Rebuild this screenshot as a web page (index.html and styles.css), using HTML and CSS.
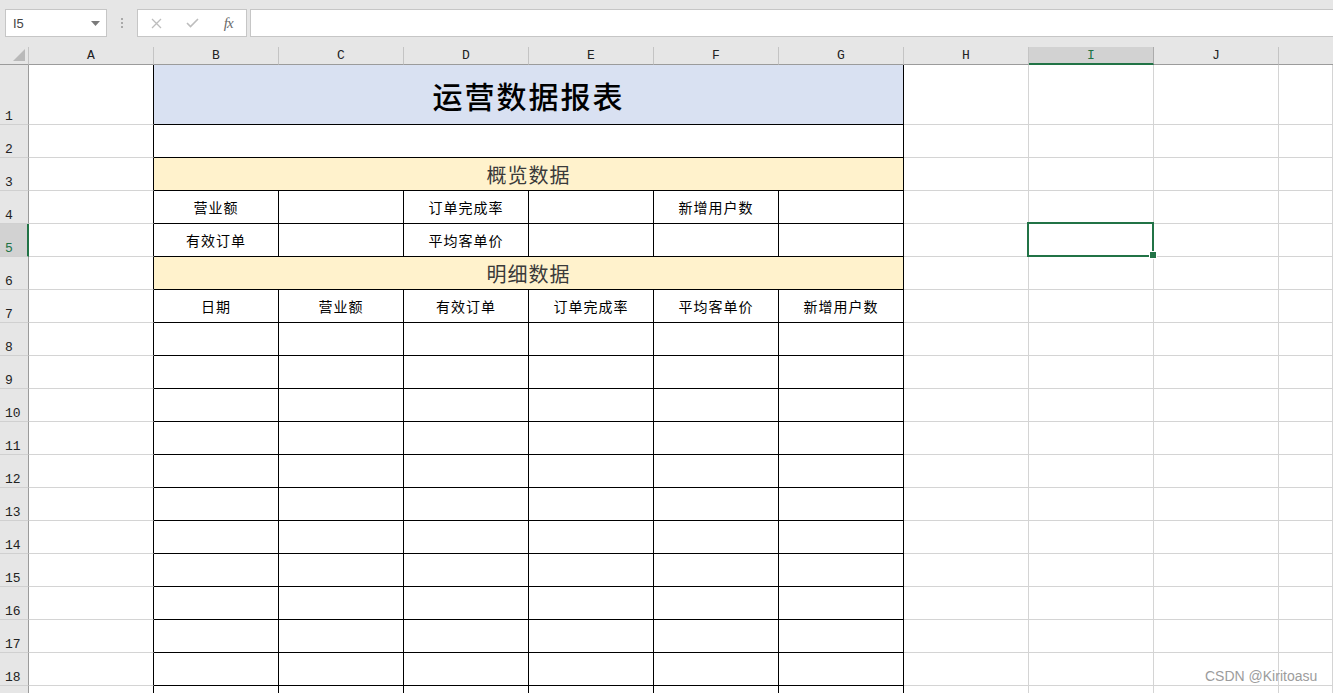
FILE: index.html
```html
<!DOCTYPE html>
<html lang="zh-CN">
<head>
<meta charset="utf-8">
<title>运营数据报表</title>
<link rel="stylesheet" href="styles.css">
</head>
<body>
<div class="toolbar">
  <div class="namebox"><span>I5</span><svg width="9" height="5" viewBox="0 0 9 5"><path d="M0 0H9L4.5 5Z" fill="#7a7a7a"/></svg></div>
  <div class="dots"><i></i><i></i><i></i></div>
  <div class="fbtns">
    <span class="fb"><svg width="11" height="11" viewBox="0 0 11 11"><path d="M1 1L10 10M10 1L1 10" stroke="#bdbdbd" stroke-width="1.3" fill="none"/></svg></span>
    <span class="fb"><svg width="13" height="10" viewBox="0 0 13 10"><path d="M1 5L4.5 8.5L12 1" stroke="#bdbdbd" stroke-width="1.6" fill="none"/></svg></span>
    <span class="fb fx">fx</span>
  </div>
  <div class="finput"></div>
</div>

<div class="sheet">
  <div class="row hdr">
    <div class="corner"><svg width="12" height="12" viewBox="0 0 12 12"><path d="M12 0V12H0Z" fill="#b9b9b9"/></svg></div>
    <div class="ch">A</div><div class="ch">B</div><div class="ch">C</div><div class="ch">D</div><div class="ch">E</div><div class="ch">F</div><div class="ch">G</div><div class="ch">H</div><div class="ch selcol">I</div><div class="ch">J</div><div class="ch last"></div>
  </div>

  <div class="row r1">
    <div class="rh"><span>1</span></div><div class="c a"></div>
    <div class="c t m6 title">运营数据报表</div>
    <div class="c"></div><div class="c"></div><div class="c"></div><div class="c last"></div>
  </div>

  <div class="row">
    <div class="rh"><span>2</span></div><div class="c a"></div>
    <div class="c t m6"></div>
    <div class="c"></div><div class="c"></div><div class="c"></div><div class="c last"></div>
  </div>

  <div class="row">
    <div class="rh"><span>3</span></div><div class="c a"></div>
    <div class="c t m6 section">概览数据</div>
    <div class="c"></div><div class="c"></div><div class="c"></div><div class="c last"></div>
  </div>

  <div class="row">
    <div class="rh"><span>4</span></div><div class="c a"></div>
    <div class="c t lbl">营业额</div><div class="c t"></div><div class="c t lbl">订单完成率</div><div class="c t"></div><div class="c t lbl">新增用户数</div><div class="c t"></div>
    <div class="c"></div><div class="c"></div><div class="c"></div><div class="c last"></div>
  </div>

  <div class="row">
    <div class="rh selrow"><span>5</span></div><div class="c a"></div>
    <div class="c t lbl">有效订单</div><div class="c t"></div><div class="c t lbl">平均客单价</div><div class="c t"></div><div class="c t"></div><div class="c t"></div>
    <div class="c"></div><div class="c active"><div class="sel"><div class="handle"></div></div></div><div class="c"></div><div class="c last"></div>
  </div>

  <div class="row">
    <div class="rh"><span>6</span></div><div class="c a"></div>
    <div class="c t m6 section">明细数据</div>
    <div class="c"></div><div class="c"></div><div class="c"></div><div class="c last"></div>
  </div>

  <div class="row">
    <div class="rh"><span>7</span></div><div class="c a"></div>
    <div class="c t lbl">日期</div><div class="c t lbl">营业额</div><div class="c t lbl">有效订单</div><div class="c t lbl">订单完成率</div><div class="c t lbl">平均客单价</div><div class="c t lbl">新增用户数</div>
    <div class="c"></div><div class="c"></div><div class="c"></div><div class="c last"></div>
  </div>

  <div class="row"><div class="rh"><span>8</span></div><div class="c a"></div><div class="c t"></div><div class="c t"></div><div class="c t"></div><div class="c t"></div><div class="c t"></div><div class="c t"></div><div class="c"></div><div class="c"></div><div class="c"></div><div class="c last"></div></div>
  <div class="row"><div class="rh"><span>9</span></div><div class="c a"></div><div class="c t"></div><div class="c t"></div><div class="c t"></div><div class="c t"></div><div class="c t"></div><div class="c t"></div><div class="c"></div><div class="c"></div><div class="c"></div><div class="c last"></div></div>
  <div class="row"><div class="rh"><span>10</span></div><div class="c a"></div><div class="c t"></div><div class="c t"></div><div class="c t"></div><div class="c t"></div><div class="c t"></div><div class="c t"></div><div class="c"></div><div class="c"></div><div class="c"></div><div class="c last"></div></div>
  <div class="row"><div class="rh"><span>11</span></div><div class="c a"></div><div class="c t"></div><div class="c t"></div><div class="c t"></div><div class="c t"></div><div class="c t"></div><div class="c t"></div><div class="c"></div><div class="c"></div><div class="c"></div><div class="c last"></div></div>
  <div class="row"><div class="rh"><span>12</span></div><div class="c a"></div><div class="c t"></div><div class="c t"></div><div class="c t"></div><div class="c t"></div><div class="c t"></div><div class="c t"></div><div class="c"></div><div class="c"></div><div class="c"></div><div class="c last"></div></div>
  <div class="row"><div class="rh"><span>13</span></div><div class="c a"></div><div class="c t"></div><div class="c t"></div><div class="c t"></div><div class="c t"></div><div class="c t"></div><div class="c t"></div><div class="c"></div><div class="c"></div><div class="c"></div><div class="c last"></div></div>
  <div class="row"><div class="rh"><span>14</span></div><div class="c a"></div><div class="c t"></div><div class="c t"></div><div class="c t"></div><div class="c t"></div><div class="c t"></div><div class="c t"></div><div class="c"></div><div class="c"></div><div class="c"></div><div class="c last"></div></div>
  <div class="row"><div class="rh"><span>15</span></div><div class="c a"></div><div class="c t"></div><div class="c t"></div><div class="c t"></div><div class="c t"></div><div class="c t"></div><div class="c t"></div><div class="c"></div><div class="c"></div><div class="c"></div><div class="c last"></div></div>
  <div class="row"><div class="rh"><span>16</span></div><div class="c a"></div><div class="c t"></div><div class="c t"></div><div class="c t"></div><div class="c t"></div><div class="c t"></div><div class="c t"></div><div class="c"></div><div class="c"></div><div class="c"></div><div class="c last"></div></div>
  <div class="row"><div class="rh"><span>17</span></div><div class="c a"></div><div class="c t"></div><div class="c t"></div><div class="c t"></div><div class="c t"></div><div class="c t"></div><div class="c t"></div><div class="c"></div><div class="c"></div><div class="c"></div><div class="c last"></div></div>
  <div class="row"><div class="rh"><span>18</span></div><div class="c a"></div><div class="c t"></div><div class="c t"></div><div class="c t"></div><div class="c t"></div><div class="c t"></div><div class="c t"></div><div class="c"></div><div class="c"></div><div class="c"></div><div class="c last"></div></div>
  <div class="row"><div class="rh"></div><div class="c a"></div><div class="c t"></div><div class="c t"></div><div class="c t"></div><div class="c t"></div><div class="c t"></div><div class="c t"></div><div class="c"></div><div class="c"></div><div class="c"></div><div class="c last"></div></div>
</div>

<div class="watermark">CSDN @Kiritoasu</div>
</body>
</html>
```

FILE: styles.css
```css
* { box-sizing: border-box; }

html, body {
  margin: 0;
  padding: 0;
}

body {
  width: 1333px;
  height: 693px;
  overflow: hidden;
  position: relative;
  background: #ffffff;
  font-family: "Noto Sans CJK SC", "Noto Sans", sans-serif;
  color: #000;
}

/* ---------- formula bar ---------- */
.toolbar {
  height: 47px;
  background: #e6e6e6;
  display: flex;
  align-items: flex-start;
  padding: 9px 0 0 5px;
}

.namebox {
  width: 102px;
  height: 28px;
  background: #fff;
  border: 1px solid #c6c6c6;
  display: flex;
  align-items: center;
  justify-content: space-between;
  padding: 0 6px 0 7px;
  font: 13px "Liberation Sans", Arial, sans-serif;
  color: #444;
}

.dots {
  width: 30px;
  height: 28px;
  display: flex;
  flex-direction: column;
  align-items: center;
  justify-content: center;
  gap: 2px;
}
.dots i {
  display: block;
  width: 2px;
  height: 2px;
  background: #a9a9a9;
}

.fbtns {
  width: 110px;
  height: 28px;
  background: #fff;
  border: 1px solid #c6c6c6;
  display: flex;
  align-items: center;
  padding-left: 1px;
}
.fb {
  width: 36px;
  height: 26px;
  display: flex;
  align-items: center;
  justify-content: center;
}
.fx {
  font: italic 15px "Liberation Serif", "DejaVu Serif", serif;
  color: #6a6a6a;
  letter-spacing: -1px;
}

.finput {
  flex: 1;
  height: 28px;
  margin-left: 3px;
  background: #fff;
  border: 1px solid #c6c6c6;
  border-right: none;
}

/* ---------- sheet ---------- */
.row {
  display: flex;
  height: 33px;
}
.row.hdr { height: 18px; background: #e6e6e6; }
.row.r1 { height: 60px; }

.corner {
  width: 29px;
  flex: none;
  border-right: 1px solid #c4c4c4;
  border-bottom: 1px solid #9b9b9b;
  display: flex;
  align-items: flex-end;
  justify-content: flex-end;
  padding: 0 3px 3px 0;
}

.ch {
  width: 125px;
  flex: none;
  border-right: 1px solid #c4c4c4;
  border-bottom: 1px solid #9b9b9b;
  text-align: center;
  font: 13px/17px "Liberation Mono", "DejaVu Sans Mono", monospace;
  color: #222;
}
.ch.selcol {
  background: #d2d2d2;
  color: #217346;
  border-bottom: 2px solid #217346;
  border-right-color: #ababab;
}
.ch.last { flex: 1; width: auto; border-right: none; }

.rh {
  width: 29px;
  flex: none;
  background: #e6e6e6;
  border-right: 1px solid #9b9b9b;
  border-bottom: 1px solid #d0d0d0;
  display: flex;
  align-items: flex-end;
  padding: 0 0 1px 5px;
  font: 13px/13px "Liberation Mono", "DejaVu Sans Mono", monospace;
  color: #222;
}
.rh.selrow {
  background: #d2d2d2;
  color: #217346;
  border-right: 2px solid #217346;
}

.c {
  width: 125px;
  flex: none;
  border-right: 1px solid #d4d4d4;
  border-bottom: 1px solid #d4d4d4;
}
.c.last { flex: 1; width: auto; }
.c.a { border-right-color: #000; }
.c.t { border-right-color: #000; border-bottom-color: #000; }
.c.m6 { width: 750px; }

.title {
  background: #d9e1f2;
  display: flex;
  align-items: center;
  justify-content: center;
  font-size: 30px;
  font-weight: 500;
  letter-spacing: 2px;
  color: #000;
}

.section {
  background: #fff2cc;
  display: flex;
  align-items: center;
  justify-content: center;
  font-size: 20px;
  letter-spacing: 1px;
  color: #3a3a3a;
}

.lbl {
  display: flex;
  align-items: center;
  justify-content: center;
  font-size: 14px;
  letter-spacing: 1px;
  color: #000;
}

.active { position: relative; }
.sel {
  position: absolute;
  left: -2px;
  top: -2px;
  right: -1px;
  bottom: -1px;
  border: 2px solid #217346;
}
.handle {
  position: absolute;
  right: -5px;
  bottom: -4px;
  width: 8px;
  height: 8px;
  background: #217346;
  border: 1px solid #fff;
}

.watermark {
  position: absolute;
  left: 1205px;
  top: 668px;
  font: 14px "Liberation Sans", Arial, sans-serif;
  color: #9c9c9c;
  white-space: nowrap;
}
```
